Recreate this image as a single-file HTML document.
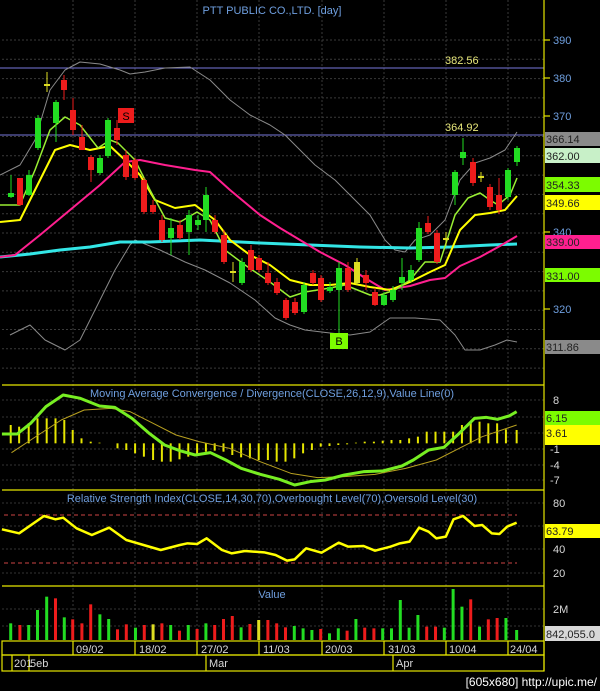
<!DOCTYPE html>
<html><head><meta charset="utf-8"><style>
html,body{margin:0;padding:0;background:#000;width:600px;height:691px;overflow:hidden}
svg{display:block}
text{font-family:"Liberation Sans",sans-serif}
</style></head><body>
<svg id="s" width="600" height="691" xmlns="http://www.w3.org/2000/svg">
<rect width="600" height="691" fill="#000"/>
<g id="grid"></g>
<g id="plot"></g>
<!-- borders -->
<g stroke="#e6e600" stroke-width="1.2" fill="none">
<line x1="544" y1="0" x2="544" y2="671"/>
<line x1="2" y1="385" x2="544" y2="385"/>
<line x1="2" y1="490" x2="544" y2="490"/>
<line x1="2" y1="586" x2="544" y2="586"/>
<rect x="2" y="641" width="542" height="14"/>
<rect x="2" y="655" width="542" height="16"/>
<line x1="73" y1="641" x2="73" y2="655"/><line x1="135" y1="641" x2="135" y2="655"/>
<line x1="197" y1="641" x2="197" y2="655"/><line x1="259" y1="641" x2="259" y2="655"/>
<line x1="322" y1="641" x2="322" y2="655"/><line x1="384" y1="641" x2="384" y2="655"/>
<line x1="446" y1="641" x2="446" y2="655"/><line x1="508" y1="641" x2="508" y2="655"/>
<line x1="12" y1="655" x2="12" y2="671"/><line x1="29" y1="655" x2="29" y2="671"/>
<line x1="206" y1="655" x2="206" y2="671"/><line x1="393" y1="655" x2="393" y2="671"/>
<line x1="544" y1="40" x2="550" y2="40"/><line x1="544" y1="78" x2="550" y2="78"/><line x1="544" y1="116" x2="550" y2="116"/><line x1="544" y1="232" x2="550" y2="232"/><line x1="544" y1="309" x2="550" y2="309"/>
</g>
<text x="272" y="14" fill="#6f9fdf" font-size="11" text-anchor="middle">PTT PUBLIC CO.,LTD. [day]</text>
<text x="445" y="64" fill="#e6e67a" font-size="11">382.56</text>
<text x="445" y="131" fill="#e6e67a" font-size="11">364.92</text>
<text x="272" y="397" fill="#6f9fdf" font-size="11" text-anchor="middle">Moving Average Convergence / Divergence(CLOSE,26,12,9),Value Line(0)</text>
<text x="272" y="502" fill="#6f9fdf" font-size="11" text-anchor="middle">Relative Strength Index(CLOSE,14,30,70),Overbought Level(70),Oversold Level(30)</text>
<text x="272" y="598" fill="#6f9fdf" font-size="11" text-anchor="middle">Value</text>
<g fill="#6f9fdf" font-size="11">
<text x="553" y="44">390</text><text x="553" y="82">380</text><text x="553" y="120">370</text><text x="553" y="236">340</text><text x="553" y="313">320</text>
</g>
<g font-size="11">
<rect x="545" y="132" width="55" height="14" fill="#8a8a8a"/><text x="546" y="143" fill="#222">366.14</text>
<rect x="545" y="148" width="55" height="15" fill="#c8f0c8"/><text x="546" y="160" fill="#222">362.00</text>
<rect x="545" y="177" width="55" height="15" fill="#7cfc00"/><text x="546" y="189" fill="#222">354.33</text>
<rect x="545" y="195" width="55" height="15" fill="#ffff00"/><text x="546" y="207" fill="#222">349.66</text>
<rect x="545" y="235" width="55" height="14" fill="#ff1f8f"/><text x="546" y="246" fill="#222">339.00</text>
<rect x="545" y="268" width="55" height="14" fill="#7cfc00"/><text x="546" y="280" fill="#222">331.00</text>
<rect x="545" y="340" width="55" height="14" fill="#8a8a8a"/><text x="546" y="351" fill="#222">311.86</text>
</g>
<g fill="#d8d8d8" font-size="11">
<text x="553" y="404">8</text><text x="550" y="453">-1</text><text x="550" y="469">-4</text><text x="550" y="484">-7</text>
<text x="553" y="507">80</text><text x="553" y="553">40</text><text x="553" y="577">20</text>
<text x="553" y="613">2M</text>
</g>
<g font-size="11">
<rect x="545" y="411" width="55" height="14" fill="#7cfc00"/><text x="546" y="422" fill="#222">6.15</text>
<rect x="545" y="425" width="55" height="20" fill="#ffff00"/><text x="546" y="437" fill="#222">3.61</text>
<rect x="545" y="524" width="55" height="14" fill="#ffff00"/><text x="546" y="535" fill="#222">63.79</text>
<rect x="545" y="626" width="55" height="15" fill="#d8d8d8"/><text x="546" y="638" fill="#222">842,055.0</text>
</g>
<g fill="#d8d8d8" font-size="11">
<text x="76" y="653">09/02</text><text x="139" y="653">18/02</text><text x="201" y="653">27/02</text><text x="263" y="653">11/03</text><text x="325" y="653">20/03</text><text x="388" y="653">31/03</text><text x="449" y="653">10/04</text><text x="510" y="653">24/04</text>
<text x="14" y="667">201</text><text x="30" y="667">5eb</text><text x="209" y="667">Mar</text><text x="396" y="667">Apr</text>
</g>
<text x="597" y="686" fill="#fff" font-size="12" text-anchor="end">[605x680] http://upic.me/</text>
</svg>
<script>
var NS="http://www.w3.org/2000/svg";
var G=document.getElementById("grid"),P=document.getElementById("plot");
function el(p,t,a){var e=document.createElementNS(NS,t);for(var k in a)e.setAttribute(k,a[k]);p.appendChild(e);return e;}
// grid
[73,135,197,259,322,384,446,508].forEach(function(x){el(G,"line",{x1:x,y1:0,x2:x,y2:640,stroke:"#3a3a3a","stroke-dasharray":"2,2"});});
for(var y=40;y<384;y+=19.3)el(G,"line",{x1:2,y1:y,x2:544,y2:y,stroke:"#3a3a3a","stroke-dasharray":"2,2"});
[400,417,433,449,465,480,503,526,549,573,609,626].forEach(function(y){el(G,"line",{x1:2,y1:y,x2:544,y2:y,stroke:"#333","stroke-dasharray":"2,2"});});
function pl(pts,c,w){el(P,"polyline",{points:pts.map(function(p){return p[0]+","+p[1]}).join(" "),fill:"none",stroke:c,"stroke-width":w,"stroke-linejoin":"round"});}
function zz(a){return a.map(function(p){return [p[0]/2.613,380+p[1]/3];});}
// horizontal lines
el(P,"line",{x1:0,y1:68,x2:544,y2:68,stroke:"#7777dd","stroke-width":1});
el(P,"line",{x1:0,y1:135,x2:544,y2:135,stroke:"#7777dd","stroke-width":1});
// BB
pl([[0,175],[20,165],[35,140],[50,90],[65,70],[80,62],[100,64],[120,70],[130,74],[145,72],[165,68],[190,67],[210,80],[230,100],[250,115],[270,125],[285,135],[300,150],[315,165],[335,180],[355,200],[370,215],[385,240],[395,250],[405,252],[415,240],[430,235],[445,220],[460,180],[475,163],[490,158],[505,150],[517,132]],"#8a8a8a",1);
pl([[10,335],[30,325],[45,340],[65,350],[80,340],[100,300],[115,270],[130,245],[135,240],[160,250],[185,262],[205,270],[230,283],[255,300],[275,318],[290,325],[305,330],[330,333],[350,335],[370,332],[390,318],[415,318],[440,320],[455,335],[465,350],[480,350],[495,345],[507,340],[517,342]],"#8a8a8a",1);
pl([[0,257],[30,254],[60,250],[90,247],[120,242],[150,242],[200,240],[260,243],[310,245],[360,247],[410,248],[450,247],[490,245],[517,244]],"#33e6e6",3);
pl([[0,257],[15,255],[40,235],[70,210],[100,185],[125,162],[140,160],[165,165],[195,170],[210,172],[230,190],[260,215],[280,228],[300,240],[320,252],[345,265],[365,278],[385,290],[410,286],[430,280],[445,278],[460,266],[480,257],[500,246],[517,236]],"#ff1f8f",2);
pl([[0,222],[20,220],[40,180],[55,150],[70,145],[90,150],[110,146],[125,160],[140,175],[155,200],[175,208],[195,205],[215,220],[230,240],[250,255],[270,265],[290,280],[310,285],[330,285],[350,283],[370,287],[390,290],[410,282],[430,272],[445,265],[460,230],[475,215],[490,213],[505,210],[517,196]],"#ffff00",2);
pl([[0,205],[20,205],[35,170],[50,130],[65,117],[80,125],[98,148],[110,140],[118,143],[135,160],[150,190],[165,218],[180,222],[197,212],[210,220],[225,250],[245,265],[270,282],[290,297],[305,292],[330,288],[345,285],[370,295],[380,295],[395,290],[410,280],[425,262],[440,262],[455,215],[468,198],[480,193],[490,200],[498,205],[510,195],[517,178]],"#99ee33",1.5);
// candles [x,top,bot,wt,wb,c]
var C=[[11,193,197,175,198,"g"],[20,178,205,178,206,"r"],[29,175,195,170,196,"g"],[38,118,148,115,150,"g"],[47,84,86,72,92,"y"],[56,102,123,100,142,"g"],[64,80,90,75,100,"r"],[73,110,130,98,135,"r"],[82,137,150,125,150,"r"],[91,157,170,155,182,"r"],[100,158,173,155,175,"g"],[108,120,156,118,158,"g"],[117,128,140,120,145,"r"],[126,155,177,150,180,"r"],[135,160,178,158,180,"r"],[144,180,212,178,214,"r"],[153,205,212,200,214,"r"],[162,220,240,215,242,"r"],[171,228,238,218,255,"g"],[180,225,238,220,240,"r"],[189,215,232,210,255,"g"],[198,220,225,215,230,"g"],[206,195,220,187,232,"g"],[215,220,232,215,234,"r"],[224,235,262,230,264,"r"],[233,271,273,262,282,"y"],[242,262,283,258,285,"g"],[251,250,270,245,272,"r"],[259,258,270,255,272,"r"],[268,273,283,262,285,"r"],[277,282,293,278,295,"r"],[286,300,318,298,320,"r"],[295,302,313,298,315,"r"],[304,285,312,282,314,"g"],[313,273,283,270,285,"r"],[321,278,300,275,302,"r"],[330,287,291,282,293,"g"],[339,268,290,262,333,"g"],[348,268,290,262,292,"r"],[357,262,283,258,285,"y"],[366,275,283,270,290,"r"],[375,292,305,288,306,"r"],[384,295,305,292,306,"g"],[393,290,300,286,302,"g"],[402,277,283,258,290,"g"],[411,270,280,265,282,"g"],[419,228,260,222,262,"g"],[428,223,232,216,234,"r"],[437,233,262,230,264,"r"],[446,238,240,232,246,"y"],[455,172,195,170,205,"g"],[463,152,158,138,165,"g"],[473,162,183,158,186,"r"],[481,176,178,172,182,"y"],[490,187,207,184,210,"r"],[499,195,210,178,214,"r"],[508,170,197,168,200,"g"],[517,148,162,146,166,"g"]];
var col={g:"#22dd22",r:"#ee1c1c",y:"#dddd22"};
C.forEach(function(c){el(P,"line",{x1:c[0],y1:c[3],x2:c[0],y2:c[4],stroke:col[c[5]],"stroke-width":1});el(P,"rect",{x:c[0]-3,y:c[1],width:6,height:Math.max(2,c[2]-c[1]),fill:col[c[5]]});});
// S and B markers
el(P,"rect",{x:118,y:108,width:16,height:15,fill:"#ee1c1c"});
var t=el(P,"text",{x:126,y:120,fill:"#000","font-size":"11","text-anchor":"middle"});t.textContent="S";
el(P,"rect",{x:330,y:333,width:18,height:16,fill:"#7cfc00"});
t=el(P,"text",{x:339,y:345,fill:"#000","font-size":"11","text-anchor":"middle"});t.textContent="B";
// MACD histogram
var hx=[28,50,75,98,122,145,168,190,213,237,260,283,307,330,353,376,400,423,446,469,492,515,538,561,584,607,630,653,676,700,723,746,769,792,815,838,861,884,907,930,953,977,1000,1023,1046,1069,1092,1115,1138,1161,1184,1207,1230,1253,1276,1299,1322,1350];
var hv=[135,140,130,115,115,115,120,150,175,185,188,190,205,210,220,230,240,245,245,238,230,222,215,212,215,225,232,235,240,240,245,245,235,220,210,200,198,195,193,188,185,185,182,180,180,175,170,155,155,155,155,135,125,125,130,130,148,150];
hx.forEach(function(x,i){var y0=380+190/3,y1=380+hv[i]/3;el(P,"line",{x1:x/2.613,y1:y0,x2:x/2.613,y2:y1,stroke:"#e6e600","stroke-width":2});});
pl(zz([[30,218],[100,165],[160,120],[220,90],[290,85],[340,95],[400,130],[460,165],[520,185],[600,205],[680,245],[760,280],[830,293],[900,290],[980,283],[1060,265],[1140,240],[1200,205],[1260,170],[1350,135]]),"#b8a020",1);
pl(zz([[5,162],[45,162],[80,130],[120,80],[165,45],[210,55],[260,78],[300,82],[345,115],[390,160],[430,195],[470,212],[510,225],[550,218],[590,240],[630,265],[680,283],[730,298],[770,315],[810,305],[850,300],[900,285],[950,275],[1000,273],[1050,258],[1080,240],[1120,210],[1160,202],[1200,160],[1240,115],[1270,112],[1300,118],[1330,108],[1350,95]]),"#77ee22",3);
// RSI
el(P,"line",{x1:4,y1:515,x2:517,y2:515,stroke:"#cc4444","stroke-dasharray":"4,3"});
el(P,"line",{x1:4,y1:563,x2:517,y2:563,stroke:"#cc4444","stroke-dasharray":"4,3"});
pl(zz([[5,448],[50,460],[115,408],[145,418],[165,413],[200,445],[240,465],[285,443],[330,480],[375,495],[420,510],[470,495],[490,490],[515,492],[540,475],[580,510],[605,520],[640,513],[690,517],[720,525],[750,542],[770,538],[800,505],[840,518],[885,488],[910,500],[950,498],[980,512],[1020,500],[1045,490],[1070,485],[1095,443],[1120,455],[1140,475],[1165,470],[1185,418],[1210,408],[1240,438],[1260,435],[1285,460],[1305,462],[1325,440],[1350,428]]),"#ffff00",2.5);
// Volume
var V=[[28,730,"g"],[52,735,"r"],[75,735,"g"],[98,690,"g"],[122,650,"g"],[145,655,"r"],[168,712,"g"],[190,718,"r"],[214,730,"r"],[237,673,"r"],[261,703,"g"],[284,717,"g"],[307,748,"r"],[330,733,"r"],[354,743,"g"],[377,735,"r"],[400,733,"y"],[423,730,"r"],[446,735,"g"],[469,752,"r"],[492,735,"g"],[515,747,"r"],[538,730,"g"],[561,735,"r"],[584,717,"r"],[607,708,"r"],[630,742,"g"],[653,732,"r"],[676,720,"y"],[700,720,"r"],[723,730,"r"],[746,742,"r"],[769,738,"g"],[792,745,"g"],[815,750,"g"],[838,747,"r"],[861,760,"g"],[884,745,"g"],[907,752,"r"],[930,717,"g"],[953,743,"r"],[977,745,"r"],[1000,745,"g"],[1023,745,"g"],[1046,660,"g"],[1069,743,"g"],[1092,705,"g"],[1115,740,"r"],[1138,740,"r"],[1161,743,"g"],[1184,627,"g"],[1207,680,"g"],[1230,658,"r"],[1253,740,"g"],[1276,718,"r"],[1299,714,"r"],[1322,714,"g"],[1350,750,"g"]];
V.forEach(function(v){el(P,"rect",{x:v[0]/2.613-1.5,y:380+v[1]/3,width:3,height:(780-v[1])/3,fill:col[v[2]]});});
</script>
</body></html>
